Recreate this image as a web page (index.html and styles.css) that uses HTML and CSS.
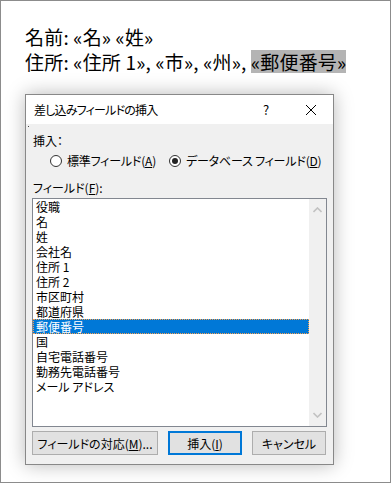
FILE: index.html
```html
<!DOCTYPE html>
<html lang="ja">
<head>
  <meta charset="UTF-8" />
  <meta name="viewport" content="width=device-width, initial-scale=1.0"/>
  <title>差し込みフィールドの挿入</title>
  <link rel="stylesheet" href="styles.css">
</head>
<body>
  <div class="page">
    <p class="doc-line">名前: «名» «姓»</p>
    <p class="doc-line">住所: «住所 1», «市», «州», <span class="mark">«郵便番号»</span></p>

    <div class="dialog">
      <div class="titlebar">
        <span class="title">差し込みフィールドの挿入</span>
        <span class="help">?</span>
        <svg class="close" width="12" height="12" viewBox="0 0 12 12">
          <path d="M1 1 L11 11 M11 1 L1 11" stroke="#000" stroke-width="1" fill="none"/>
        </svg>
      </div>

      <div class="dialog-body">
        <span class="dot"></span>
        <div class="label">挿入：</div>
        <div class="radios">
          <label class="radio"><span class="circle"></span><span>標準フィールド(<u>A</u>)</span></label>
          <label class="radio"><span class="circle checked"></span><span>データベース フィールド(<u>D</u>)</span></label>
        </div>
        <div class="label fields-label">フィールド(<u>F</u>):</div>

        <div class="listbox">
          <ul class="items">
            <li>役職</li>
            <li>名</li>
            <li>姓</li>
            <li>会社名</li>
            <li>住所 1</li>
            <li>住所 2</li>
            <li>市区町村</li>
            <li>都道府県</li>
            <li class="selected">郵便番号</li>
            <li>国</li>
            <li>自宅電話番号</li>
            <li>勤務先電話番号</li>
            <li>メール アドレス</li>
          </ul>
          <div class="scrollbar">
            <svg width="9" height="6" viewBox="0 0 9 6"><path d="M0.5 5 L4.5 1 L8.5 5" stroke="#c2c2c2" stroke-width="1.6" fill="none"/></svg>
            <svg width="9" height="6" viewBox="0 0 9 6"><path d="M0.5 1 L4.5 5 L8.5 1" stroke="#c2c2c2" stroke-width="1.6" fill="none"/></svg>
          </div>
        </div>

        <div class="buttons">
          <button class="btn btn-wide">フィールドの対応(<u>M</u>)...</button>
          <button class="btn btn-default">挿入(<u>I</u>)</button>
          <button class="btn">キャンセル</button>
        </div>
      </div>
    </div>
  </div>
</body>
</html>
```

FILE: styles.css
```css
body {
  margin: 0;
  background: #fff;
  font-family: "Noto Sans CJK JP", "Noto Sans", sans-serif;
}

.page {
  box-sizing: border-box;
  width: 391px;
  height: 483px;
  border: 1px solid #8c8c8c;
  padding: 23px 0 0 24px;
}

.doc-line {
  margin: 0;
  font-size: 19px;
  letter-spacing: 0.2px;
  line-height: 25px;
  color: #000;
}

.mark {
  display: inline-block;
  line-height: 23px;
  background: #b4b4b4;
}

.dialog {
  box-sizing: border-box;
  width: 309px;
  height: 371px;
  margin-top: 20px;
  border: 1px solid #888;
  background: #f0f0f0;
  box-shadow: 0 0 18px rgba(0, 0, 0, 0.28);
  font-size: 12px;
  font-feature-settings: "palt";
  color: #000;
}

.titlebar {
  display: flex;
  align-items: center;
  height: 29px;
  background: #fff;
  padding-left: 8px;
}

.title {
  flex: 1;
  letter-spacing: -0.8px;
}

.help {
  width: 12px;
  margin-right: 33px;
  font-size: 13px;
  text-align: center;
}

.close {
  margin-right: 16px;
}

.dialog-body {
  position: relative;
  padding: 0 6px;
}

.dot {
  position: absolute;
  left: 2px;
  top: 2px;
  width: 1px;
  height: 1px;
  background: #444;
}

.label {
  padding-left: 1px;
  height: 20px;
  line-height: 20px;
  padding-top: 7px;
}

.radios {
  display: flex;
  gap: 13px;
  padding-left: 18px;
  height: 20px;
  line-height: 20px;
}

.radio {
  display: flex;
  align-items: center;
  white-space: nowrap;
  letter-spacing: -0.2px;
}

.circle {
  box-sizing: border-box;
  width: 12px;
  height: 12px;
  border: 1px solid #333;
  border-radius: 50%;
  background: #fff;
  margin-right: 5px;
  position: relative;
}

.circle.checked::after {
  content: "";
  position: absolute;
  left: 2px;
  top: 2px;
  width: 6px;
  height: 6px;
  border-radius: 50%;
  background: #222;
}

.fields-label {
  padding-top: 0;
  margin-top: 8px;
  height: 17px;
  line-height: 17px;
}

.listbox {
  box-sizing: border-box;
  display: flex;
  width: 295px;
  height: 229px;
  margin-top: 2px;
  border: 1px solid #828790;
  background: #fff;
}

.items {
  flex: 1;
  list-style: none;
  margin: 0;
  padding: 0;
}

.items li {
  box-sizing: border-box;
  height: 15px;
  line-height: 15px;
  padding-left: 3px;
  white-space: nowrap;
}

.items li.selected {
  background: #0078d7;
  color: #fff;
  border: 1px dotted #f5a050;
  padding-left: 2px;
  line-height: 13px;
}

.scrollbar {
  width: 17px;
  background: #f0f0f0;
  display: flex;
  flex-direction: column;
  justify-content: space-between;
  align-items: center;
  padding: 8px 0;
}

.buttons {
  display: flex;
  gap: 10px;
  margin-top: 4px;
}

.btn {
  box-sizing: border-box;
  width: 74px;
  height: 24px;
  border: 1px solid #adadad;
  background: #e1e1e1;
  font: inherit;
  font-size: 12px;
  color: #000;
  padding: 0;
}

.btn-wide {
  width: 126px;
}

.btn-default {
  border: 2px solid #0078d7;
}
```
